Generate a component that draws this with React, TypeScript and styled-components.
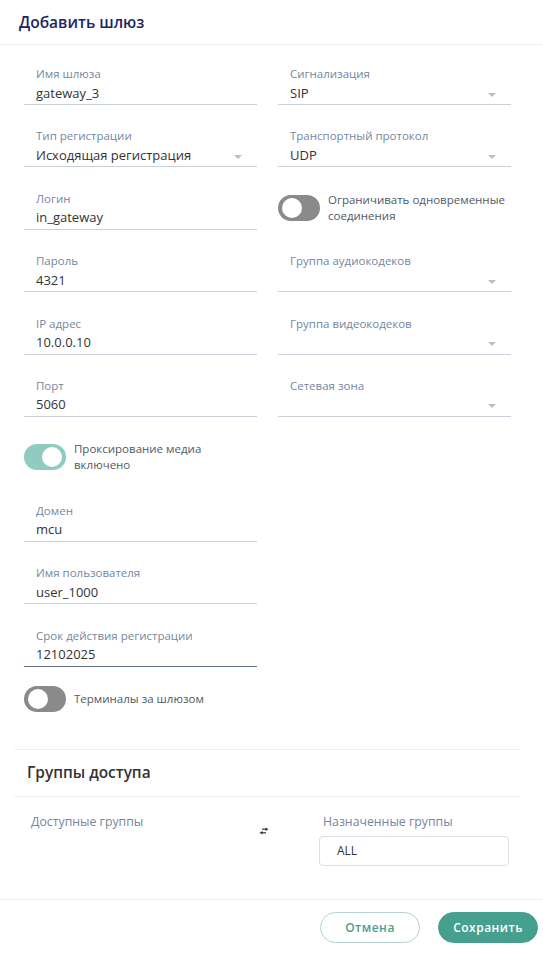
import React from "react";
import styled, { createGlobalStyle } from "styled-components";

const GlobalStyle = createGlobalStyle`
  body {
    margin: 0;
    background: #ffffff;
    font-family: "Open Sans", "Noto Sans", sans-serif;
  }
`;

const Modal = styled.div`
  width: 543px;
  background: #fff;
`;

const Header = styled.div`
  height: 44px;
  padding: 0 19px;
  display: flex;
  align-items: center;
  border-bottom: 1px solid #efeff1;
`;

const Title = styled.h2`
  margin: 0;
  font-size: 15.5px;
  font-weight: 600;
  color: #1d2563;
`;

const FormGrid = styled.div`
  display: grid;
  grid-template-columns: 233px 233px;
  column-gap: 21px;
  padding: 21px 0 0 24px;
  align-items: start;
`;

const Column = styled.div`
  display: flex;
  flex-direction: column;
  gap: 23.4px;
`;

// Field with label + value and an underline
const Field = styled.div<{ $active?: boolean }>`
  padding: 0 12px 1px;
  border-bottom: 1px solid ${({ $active }) => ($active ? "#5f7289" : "#c9d1da")};
`;

const Label = styled.div`
  font-size: 11.5px;
  line-height: 16px;
  color: #7487a0;
`;

const ValueRow = styled.div`
  display: flex;
  align-items: center;
  height: 21px;
`;

const Value = styled.div`
  flex: 1;
  font-size: 13px;
  line-height: 20px;
  color: #333;
`;

const Caret = styled.span`
  width: 0;
  height: 0;
  margin: 4px 3px 0 0;
  border-left: 4px solid transparent;
  border-right: 4px solid transparent;
  border-top: 4px solid #b5c0cc;
`;

const ToggleRow = styled.div<{ $single?: boolean }>`
  display: flex;
  align-items: center;
  gap: 8px;
  margin: ${({ $single }) => ($single ? "-4px 0 0" : "1px 0 6px")};
`;

const Switch = styled.div<{ $on?: boolean }>`
  flex: none;
  width: 42px;
  height: 26px;
  box-sizing: border-box;
  padding: 3px 4px;
  border-radius: 13px;
  display: flex;
  justify-content: ${({ $on }) => ($on ? "flex-end" : "flex-start")};
  background: ${({ $on }) => ($on ? "#8fcbbf" : "#8a8a8a")};
`;

const Knob = styled.div`
  width: 20px;
  height: 20px;
  border-radius: 50%;
  background: #fff;
`;

const ToggleText = styled.div<{ $maxWidth: number }>`
  max-width: ${({ $maxWidth }) => $maxWidth}px;
  font-size: 11.5px;
  line-height: 16px;
  color: #4f5965;
`;

const AccessSection = styled.div`
  margin: 37px 22px 0 14px;
`;

const SectionTitle = styled.div`
  height: 46px;
  padding-left: 13px;
  display: flex;
  align-items: center;
  border-top: 1px solid #f0f0f2;
  border-bottom: 1px solid #f0f0f2;
  font-size: 15.4px;
  font-weight: 600;
  color: #333;
`;

const GroupsRow = styled.div`
  display: flex;
  align-items: flex-start;
  padding: 17px 0 33px 17px;
`;

const GroupColumn = styled.div<{ $width: number }>`
  width: ${({ $width }) => $width}px;
`;

const GroupLabel = styled(Label)<{ $indent?: boolean }>`
  font-size: 12.3px;
  padding-left: ${({ $indent }) => ($indent ? 4 : 0)}px;
`;

const SwapButton = styled.div`
  width: 10px;
  margin: 13px 50px 0 0;
  display: flex;
  color: #333;
`;

const GroupBox = styled.div`
  margin-top: 6px;
  height: 30px;
  box-sizing: border-box;
  border: 1px solid #d7dfe7;
  border-radius: 4px;
  padding: 0 17px;
  display: flex;
  align-items: center;
  font-size: 12px;
  color: #333;
`;

const Footer = styled.div`
  border-top: 1px solid #efeff1;
  display: flex;
  justify-content: flex-end;
  gap: 18px;
  padding: 12px 5px 24px 0;
`;

const Button = styled.button<{ $primary?: boolean }>`
  width: 100px;
  height: 31px;
  border-radius: 16px;
  font-family: "Open Sans", sans-serif;
  font-size: 12px;
  font-weight: 600;
  letter-spacing: 0.5px;
  cursor: pointer;
  border: 1px solid ${({ $primary }) => ($primary ? "#46a08f" : "#b4d2d2")};
  background: ${({ $primary }) => ($primary ? "#46a08f" : "#fff")};
  color: ${({ $primary }) => ($primary ? "#fff" : "#4a9e8f")};
`;

interface InputProps {
  label: string;
  value?: string;
  select?: boolean;
  active?: boolean;
}

const Input: React.FC<InputProps> = ({ label, value, select, active }) => (
  <Field $active={active}>
    <Label>{label}</Label>
    <ValueRow>
      <Value>{value}</Value>
      {select && <Caret />}
    </ValueRow>
  </Field>
);

const Toggle: React.FC<{ on?: boolean; text: string; maxWidth: number; single?: boolean }> = ({
  on,
  text,
  maxWidth,
  single,
}) => (
  <ToggleRow $single={single}>
    <Switch $on={on}>
      <Knob />
    </Switch>
    <ToggleText $maxWidth={maxWidth}>{text}</ToggleText>
  </ToggleRow>
);

const SwapIcon = () => (
  <svg width="10" height="8" viewBox="0 0 10 8">
    <path d="M3 2.2h4" stroke="currentColor" strokeWidth="1.2" />
    <path d="M6.5 0.5 9.5 2.2 6.5 3.9z" fill="currentColor" />
    <path d="M7 5.8H3" stroke="currentColor" strokeWidth="1.2" />
    <path d="M3.5 4.1 0.5 5.8 3.5 7.5z" fill="currentColor" />
  </svg>
);

export default function App() {
  return (
    <Modal>
      <GlobalStyle />
      <Header>
        <Title>Добавить шлюз</Title>
      </Header>

      <FormGrid>
        <Column>
          <Input label="Имя шлюза" value="gateway_3" />
          <Input label="Тип регистрации" value="Исходящая регистрация" select />
          <Input label="Логин" value="in_gateway" />
          <Input label="Пароль" value="4321" />
          <Input label="IP адрес" value="10.0.0.10" />
          <Input label="Порт" value="5060" />
          <Toggle on text="Проксирование медиа включено" maxWidth={150} />
          <Input label="Домен" value="mcu" />
          <Input label="Имя пользователя" value="user_1000" />
          <Input label="Срок действия регистрации" value="12102025" active />
          <Toggle text="Терминалы за шлюзом" maxWidth={180} single />
        </Column>
        <Column>
          <Input label="Сигнализация" value="SIP" select />
          <Input label="Транспортный протокол" value="UDP" select />
          <Toggle text="Ограничивать одновременные соединения" maxWidth={183} />
          <Input label="Группа аудиокодеков" select />
          <Input label="Группа видеокодеков" select />
          <Input label="Сетевая зона" select />
        </Column>
      </FormGrid>

      <AccessSection>
        <SectionTitle>Группы доступа</SectionTitle>
        <GroupsRow>
          <GroupColumn $width={228}>
            <GroupLabel>Доступные группы</GroupLabel>
          </GroupColumn>
          <SwapButton>
            <SwapIcon />
          </SwapButton>
          <GroupColumn $width={190}>
            <GroupLabel $indent>Назначенные группы</GroupLabel>
            <GroupBox>ALL</GroupBox>
          </GroupColumn>
        </GroupsRow>
      </AccessSection>

      <Footer>
        <Button>Отмена</Button>
        <Button $primary>Сохранить</Button>
      </Footer>
    </Modal>
  );
}
